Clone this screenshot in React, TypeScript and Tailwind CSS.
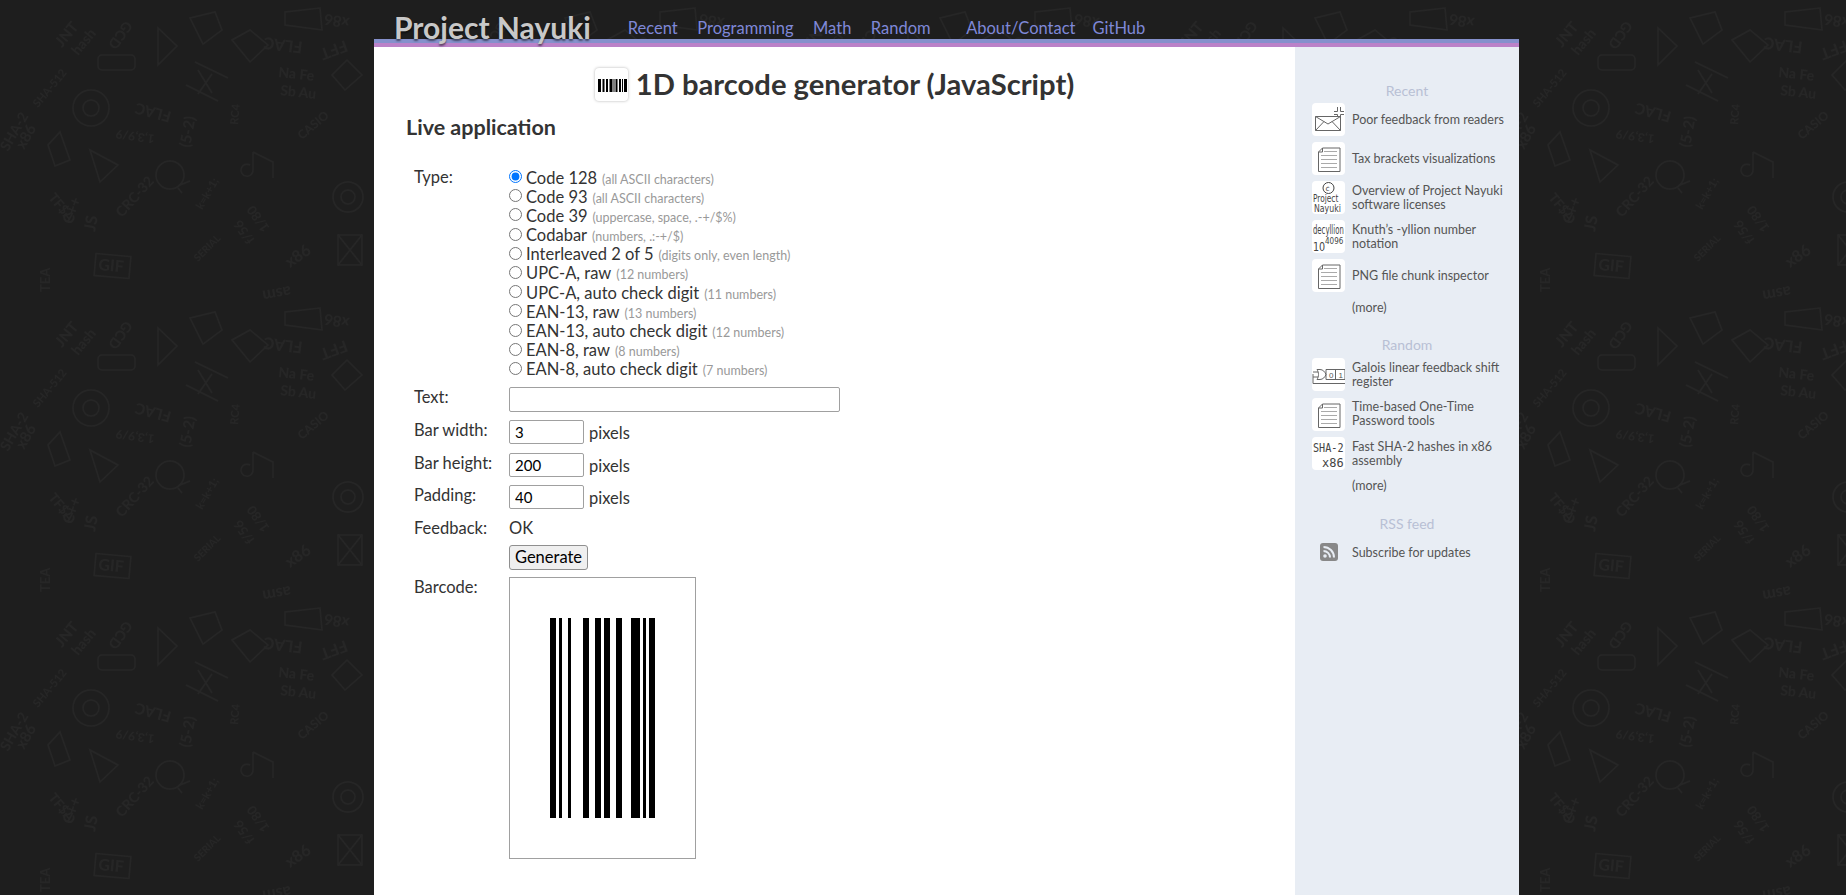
import type { ReactNode } from 'react'

const navLinks = [
  { label: 'Recent', className: '' },
  { label: 'Programming', className: '' },
  { label: 'Math', className: '' },
  { label: 'Random', className: 'mr-[16px]' },
  { label: 'About/Contact', className: '' },
  { label: 'GitHub', className: '-ml-[2.5px]' },
]

const barcodeTypes = [
  { name: 'Code 128', hint: '(all ASCII characters)' },
  { name: 'Code 93', hint: '(all ASCII characters)' },
  { name: 'Code 39', hint: '(uppercase, space, .-+/$%)' },
  { name: 'Codabar', hint: '(numbers, .:-+/$)' },
  { name: 'Interleaved 2 of 5', hint: '(digits only, even length)' },
  { name: 'UPC-A, raw', hint: '(12 numbers)' },
  { name: 'UPC-A, auto check digit', hint: '(11 numbers)' },
  { name: 'EAN-13, raw', hint: '(13 numbers)' },
  { name: 'EAN-13, auto check digit', hint: '(12 numbers)' },
  { name: 'EAN-8, raw', hint: '(8 numbers)' },
  { name: 'EAN-8, auto check digit', hint: '(7 numbers)' },
]

// [offset, width] in px, measured off the reference
const bars = [
  [0, 6], [9, 3], [18, 3], [33, 6], [45, 6], [54, 6], [66, 6], [81, 9], [93, 3], [99, 6],
]

// scattered doodles of the page background: [text, x, y, rotation, size]
const doodleTexts: [string, number, number, number, number][] = [
  ['JNT', 62, 48, -50, 15],
  ['hash', 78, 56, -50, 14],
  ['GCD', 125, 20, 125, 14],
  ['FLAC', 172, 112, 195, 15],
  ['FLAC', 303, 42, 187, 16],
  ['FFT', 345, 40, 160, 16],
  ['x86', 350, 18, 190, 15],
  ['Na Fe', 278, 77, 6, 14],
  ['Sb Au', 280, 95, 6, 14],
  ['SHA-2', 8, 152, -60, 14],
  ['x86', 24, 150, -60, 15],
  ['SHA-512', 38, 108, -50, 11],
  ['1,3,9/9', 155, 135, 188, 12],
  ['(5-2)', 190, 148, -80, 15],
  ['RC4', 238, 125, -85, 11],
  ['CASIO', 302, 140, -40, 12],
  ['f/56', 255, 240, 235, 13],
  ['1/80', 270, 228, 235, 13],
  ['TF$A', 48, 198, 50, 13],
  ['C++', 72, 225, -70, 15],
  ['JS', 95, 232, -80, 16],
  ['CRC-32', 122, 218, -48, 14],
  ['k=k+1;', 202, 210, -60, 11],
  ['TEA', 50, 292, -90, 13],
  ['x86', 290, 268, -35, 16],
  ['asm', 290, 286, 170, 16],
  ['GIF', 98, 270, 5, 16],
  ['SERIAL', 198, 262, -45, 10],
]

function BackgroundDoodles() {
  return (
    <svg className="absolute inset-0 h-full w-full" aria-hidden="true">
      <defs>
        <pattern id="doodles" width="375" height="300" patternUnits="userSpaceOnUse">
          <g fill="#262626" fontFamily="Lato, sans-serif" fontWeight="700">
            {doodleTexts.map(([text, x, y, rotation, size]) => (
              <text key={`${text}-${x}`} x={x} y={y} fontSize={size} transform={`rotate(${rotation} ${x} ${y})`}>{text}</text>
            ))}
          </g>
          <g fill="none" stroke="#262626" strokeWidth="1.5">
            <path d="M158 28L177 46L158 65Z" />
            <rect x="98" y="55" width="37" height="15" rx="4" />
            <circle cx="91" cy="108" r="18" />
            <circle cx="91" cy="108" r="8" />
            <path d="M195 62L228 78M186 85L218 101M198 70L212 93M212 74L198 94" />
            <path d="M190 18L215 12L222 30L203 44Z" />
            <path d="M232 40L250 30L268 45L250 62Z" />
            <path d="M285 12L320 8L322 30L285 25Z" />
            <path d="M347 60L362 75L345 90L332 75Z" />
            <circle cx="170" cy="175" r="14" />
            <path d="M180 185L190 181M178 188L182 193" />
            <path d="M253 152V170A6 6 0 1 1 250 165M253 152L273 162V178" />
            <circle cx="348" cy="197" r="15" />
            <circle cx="348" cy="197" r="7" />
            <path d="M60 132L70 160L55 166L48 145Z" />
            <path d="M90 150L118 165L100 182Z" />
            <rect x="338" y="235" width="24" height="30" />
            <path d="M338 235L362 265M362 235L338 265" />
            <rect x="95" y="255" width="35" height="22" transform="rotate(5 112 266)" />
          </g>
        </pattern>
      </defs>
      <rect width="100%" height="100%" fill="url(#doodles)" />
    </svg>
  )
}

function PageIcon() {
  return (
    <svg viewBox="0 0 33 33" className="h-[33px] w-[33px]" fill="none" stroke="#666" strokeWidth="1">
      <path d="M10.5 6H28V29.5H6.5V10Z" />
      <path d="M10.5 6V10H6.5" />
      <path d="M12 9.5H25M9 13.5H25M9 17.5H25M9 21.5H25M9 25.5H25" stroke="#aaa" />
    </svg>
  )
}

function MailIcon() {
  return (
    <svg viewBox="0 0 33 33" className="h-[33px] w-[33px]" fill="none" stroke="#666" strokeWidth="1">
      <path d="M3.5 13.5H28.5V27.5H3.5Z" />
      <path d="M3.5 13.5L16 21L28.5 13.5M3.5 27.5L12 18.5M28.5 27.5L20 18.5" />
      <path d="M25.5 4V8.5H22M28.5 4V8.5H32M22 11.5H25.5V14M32 11.5H28.5V14" />
    </svg>
  )
}

function RegisterIcon() {
  return (
    <svg viewBox="0 0 33 33" className="h-[33px] w-[33px]" fill="none" stroke="#666" strokeWidth="1">
      <path d="M14 11.5H33V21.5H14Z" />
      <path d="M23.5 11.5V21.5" />
      <path d="M5 11.5H8C11 11.5 13 14 14 16.5C13 19 11 21.5 8 21.5H5C7 18.5 7 14.5 5 11.5Z" />
      <path d="M1 14H6M1 19H6M1 16V25.5H33" />
      <text x="17" y="19.5" fontSize="8" fill="#555" stroke="none" fontFamily="Liberation Sans, sans-serif">0</text>
      <text x="26.5" y="19.5" fontSize="8" fill="#555" stroke="none" fontFamily="Liberation Sans, sans-serif">1</text>
    </svg>
  )
}

function LicenseIcon() {
  return (
    <svg viewBox="0 0 33 33" className="h-[33px] w-[33px]" fill="#444" fontFamily="DejaVu Sans, sans-serif">
      <circle cx="16.5" cy="7" r="5.5" fill="none" stroke="#444" />
      <text x="13.5" y="9.5" fontSize="7.5">c</text>
      <text transform="translate(1 21) scale(0.74 1)" fontSize="10">Project</text>
      <text transform="translate(2 31) scale(0.78 1)" fontSize="10">Nayuki</text>
    </svg>
  )
}

function YllionIcon() {
  return (
    <svg viewBox="0 0 33 33" className="h-[33px] w-[33px]" fill="#444" fontFamily="DejaVu Sans, sans-serif">
      <text transform="translate(1 14) scale(0.53 1)" fontSize="13">decyllion</text>
      <text transform="translate(1 31) scale(0.8 1)" fontSize="12">10</text>
      <text transform="translate(13 24) scale(0.8 1)" fontSize="9">4096</text>
    </svg>
  )
}

function ShaIcon() {
  return (
    <svg viewBox="0 0 33 33" className="h-[33px] w-[33px]" fill="#444" fontFamily="DejaVu Sans Mono, monospace">
      <text transform="translate(1 15) scale(0.78 1)" fontSize="13">SHA-2</text>
      <text transform="translate(10 30) scale(0.92 1)" fontSize="13">x86</text>
    </svg>
  )
}

function SidebarItem({ icon, title }: { icon: ReactNode; title: string }) {
  return (
    <div className="flex h-[33px] items-center gap-[7px]">
      <div className="flex h-[33px] w-[33px] shrink-0 items-center justify-center overflow-hidden rounded-[4px] bg-white">
        {icon}
      </div>
      <span className="w-[160px] text-[12.5px] leading-[14px] text-[#555]">{title}</span>
    </div>
  )
}

function FormRow({ label, children, className = '' }: { label: string; children: ReactNode; className?: string }) {
  return (
    <div className={`flex items-start ${className}`}>
      <div className="w-[95px] shrink-0 pt-[1px] text-[#333]">{label}</div>
      {children}
    </div>
  )
}

function NumberRow({ label, value }: { label: string; value: string }) {
  return (
    <FormRow label={label} className="h-[32.67px]">
      <input
        readOnly
        value={value}
        className="h-[24px] w-[75px] rounded-[2px] border border-[#a0a0a0] bg-white px-[5px] text-[15px] text-black"
      />
      <span className="ml-[5px] mt-[4px] text-[#333]">pixels</span>
    </FormRow>
  )
}

export default function App() {
  return (
    <div className="relative h-[895px] overflow-hidden bg-[#1e1e1e] font-['Lato',sans-serif] text-[16.5px] leading-[19px]">
      <BackgroundDoodles />
      <div className="relative ml-[374px] flex h-[895px] w-[1145px] flex-col">
        <header className="relative z-10 flex h-[39px] items-start pl-[20px]">
          <span className="mt-[9px] whitespace-nowrap text-[30px] font-bold leading-[36px] text-[#c8c8c8] [text-shadow:0_2px_2px_rgba(0,0,0,0.5)]">Project Nayuki</span>
          <nav className="ml-[37px] mt-[17px] flex gap-[19.5px] text-[16.5px] leading-[22px] text-[#7f88d8]">
            {navLinks.map((link) => (
              <span key={link.label} className={link.className}>{link.label}</span>
            ))}
          </nav>
        </header>
        <div className="h-[4px] bg-[#8590cc]" />
        <div className="h-[4px] bg-[#bb82c8]" />

        <div className="flex flex-1">
          <main className="flex-1 bg-white px-[32px]">
            <h1 className="mt-[20px] flex items-center justify-center gap-[8px] text-[29.2px] font-bold leading-[34px] text-[#333]">
              <span className="flex h-[33px] w-[33px] items-center justify-center rounded-[4px] bg-white shadow-[0_0_3px_rgba(0,0,0,0.3)]">
                <svg viewBox="0 0 33 33" className="h-[33px] w-[33px]" fill="#000">
                  <path d="M3 11h3v13H3zM7.5 11h2v13h-2zM11 11h2v13h-2zM14.5 11h3v13h-3zM18.5 11h1v13h-1zM20.5 11h2v13h-2zM24 11h2v13h-2zM27 11h1v13h-1zM29 11h3v13h-3z" />
                </svg>
              </span>
              1D barcode generator (JavaScript)
            </h1>
            <h2 className="mt-[12px] text-[21.5px] font-bold leading-[28px] text-[#333]">Live application</h2>

            <form className="mt-[26px] pl-[8px]">
              <FormRow label="Type:">
                <div className="flex flex-col">
                  {barcodeTypes.map((type, i) => (
                    <label key={type.name} className="flex h-[19.2px] whitespace-nowrap text-[#333]">
                      <input type="radio" name="type" defaultChecked={i === 0} className="mr-[4px] mt-[3px] h-[13px] w-[13px] accent-[#0075ff]" />
                      <span className="flex items-baseline pt-[1.5px]">
                        <span>{type.name}</span>
                        <span className="ml-[5px] text-[12.5px] text-[#999]">{type.hint}</span>
                      </span>
                    </label>
                  ))}
                </div>
              </FormRow>
              <FormRow label="Text:" className="mt-[9.4px] h-[32.67px]">
                <input readOnly className="h-[25px] w-[331px] rounded-[2px] border border-[#a0a0a0] bg-white" />
              </FormRow>
              <NumberRow label="Bar width:" value="3" />
              <NumberRow label="Bar height:" value="200" />
              <NumberRow label="Padding:" value="40" />
              <FormRow label="Feedback:" className="h-[26.5px]">
                <span className="pt-[1px] text-[#333]">OK</span>
              </FormRow>
              <FormRow label="" className="h-[32.83px]">
                <button type="button" className="h-[25px] w-[79px] rounded-[3px] border border-[#8f8f8f] bg-[#efefef] text-black">Generate</button>
              </FormRow>
              <FormRow label="Barcode:">
                <div className="h-[282px] w-[187px] border border-[#a0a0a0] bg-white p-[40px]">
                  <div className="relative h-[200px]">
                    {bars.map(([left, width]) => (
                      <div key={left} className="absolute top-0 h-[200px] bg-black" style={{ left, width }} />
                    ))}
                  </div>
                </div>
              </FormRow>
            </form>
          </main>

          <aside className="w-[224px] bg-[#e8edf4] pl-[17px] pt-[34px]">
            <div className="pr-[17px] text-center text-[14px] leading-[20px] text-[#b8c0d4]">Recent</div>
            <div className="mt-[2px] flex flex-col gap-[6px]">
              <SidebarItem icon={<MailIcon />} title="Poor feedback from readers" />
              <SidebarItem icon={<PageIcon />} title="Tax brackets visualizations" />
              <SidebarItem icon={<LicenseIcon />} title="Overview of Project Nayuki software licenses" />
              <SidebarItem icon={<YllionIcon />} title="Knuth’s -yllion number notation" />
              <SidebarItem icon={<PageIcon />} title="PNG file chunk inspector" />
            </div>
            <div className="mt-[7px] pl-[40px] text-[12.5px] leading-[18px] text-[#555]">(more)</div>

            <div className="mt-[18px] pr-[17px] text-center text-[14px] leading-[20px] text-[#b8c0d4]">Random</div>
            <div className="mt-[3px] flex flex-col gap-[6.5px]">
              <SidebarItem icon={<RegisterIcon />} title="Galois linear feedback shift register" />
              <SidebarItem icon={<PageIcon />} title="Time-based One-Time Password tools" />
              <SidebarItem icon={<ShaIcon />} title="Fast SHA-2 hashes in x86 assembly" />
            </div>
            <div className="mt-[7px] pl-[40px] text-[12.5px] leading-[18px] text-[#555]">(more)</div>

            <div className="mt-[19px] pr-[17px] text-center text-[14px] leading-[20px] text-[#b8c0d4]">RSS feed</div>
            <div className="mt-[6px] flex h-[24px] items-center gap-[7px]">
              <div className="flex w-[33px] justify-center">
                <svg viewBox="0 0 18 18" className="h-[18px] w-[18px]">
                  <rect width="18" height="18" rx="3" fill="#888" />
                  <circle cx="5" cy="13" r="1.8" fill="#e8edf4" />
                  <path d="M3.5 8a6.5 6.5 0 0 1 6.5 6.5M3.5 4a10.5 10.5 0 0 1 10.5 10.5" fill="none" stroke="#e8edf4" strokeWidth="2" />
                </svg>
              </div>
              <span className="text-[12.5px] text-[#555]">Subscribe for updates</span>
            </div>
          </aside>
        </div>
      </div>
    </div>
  )
}
